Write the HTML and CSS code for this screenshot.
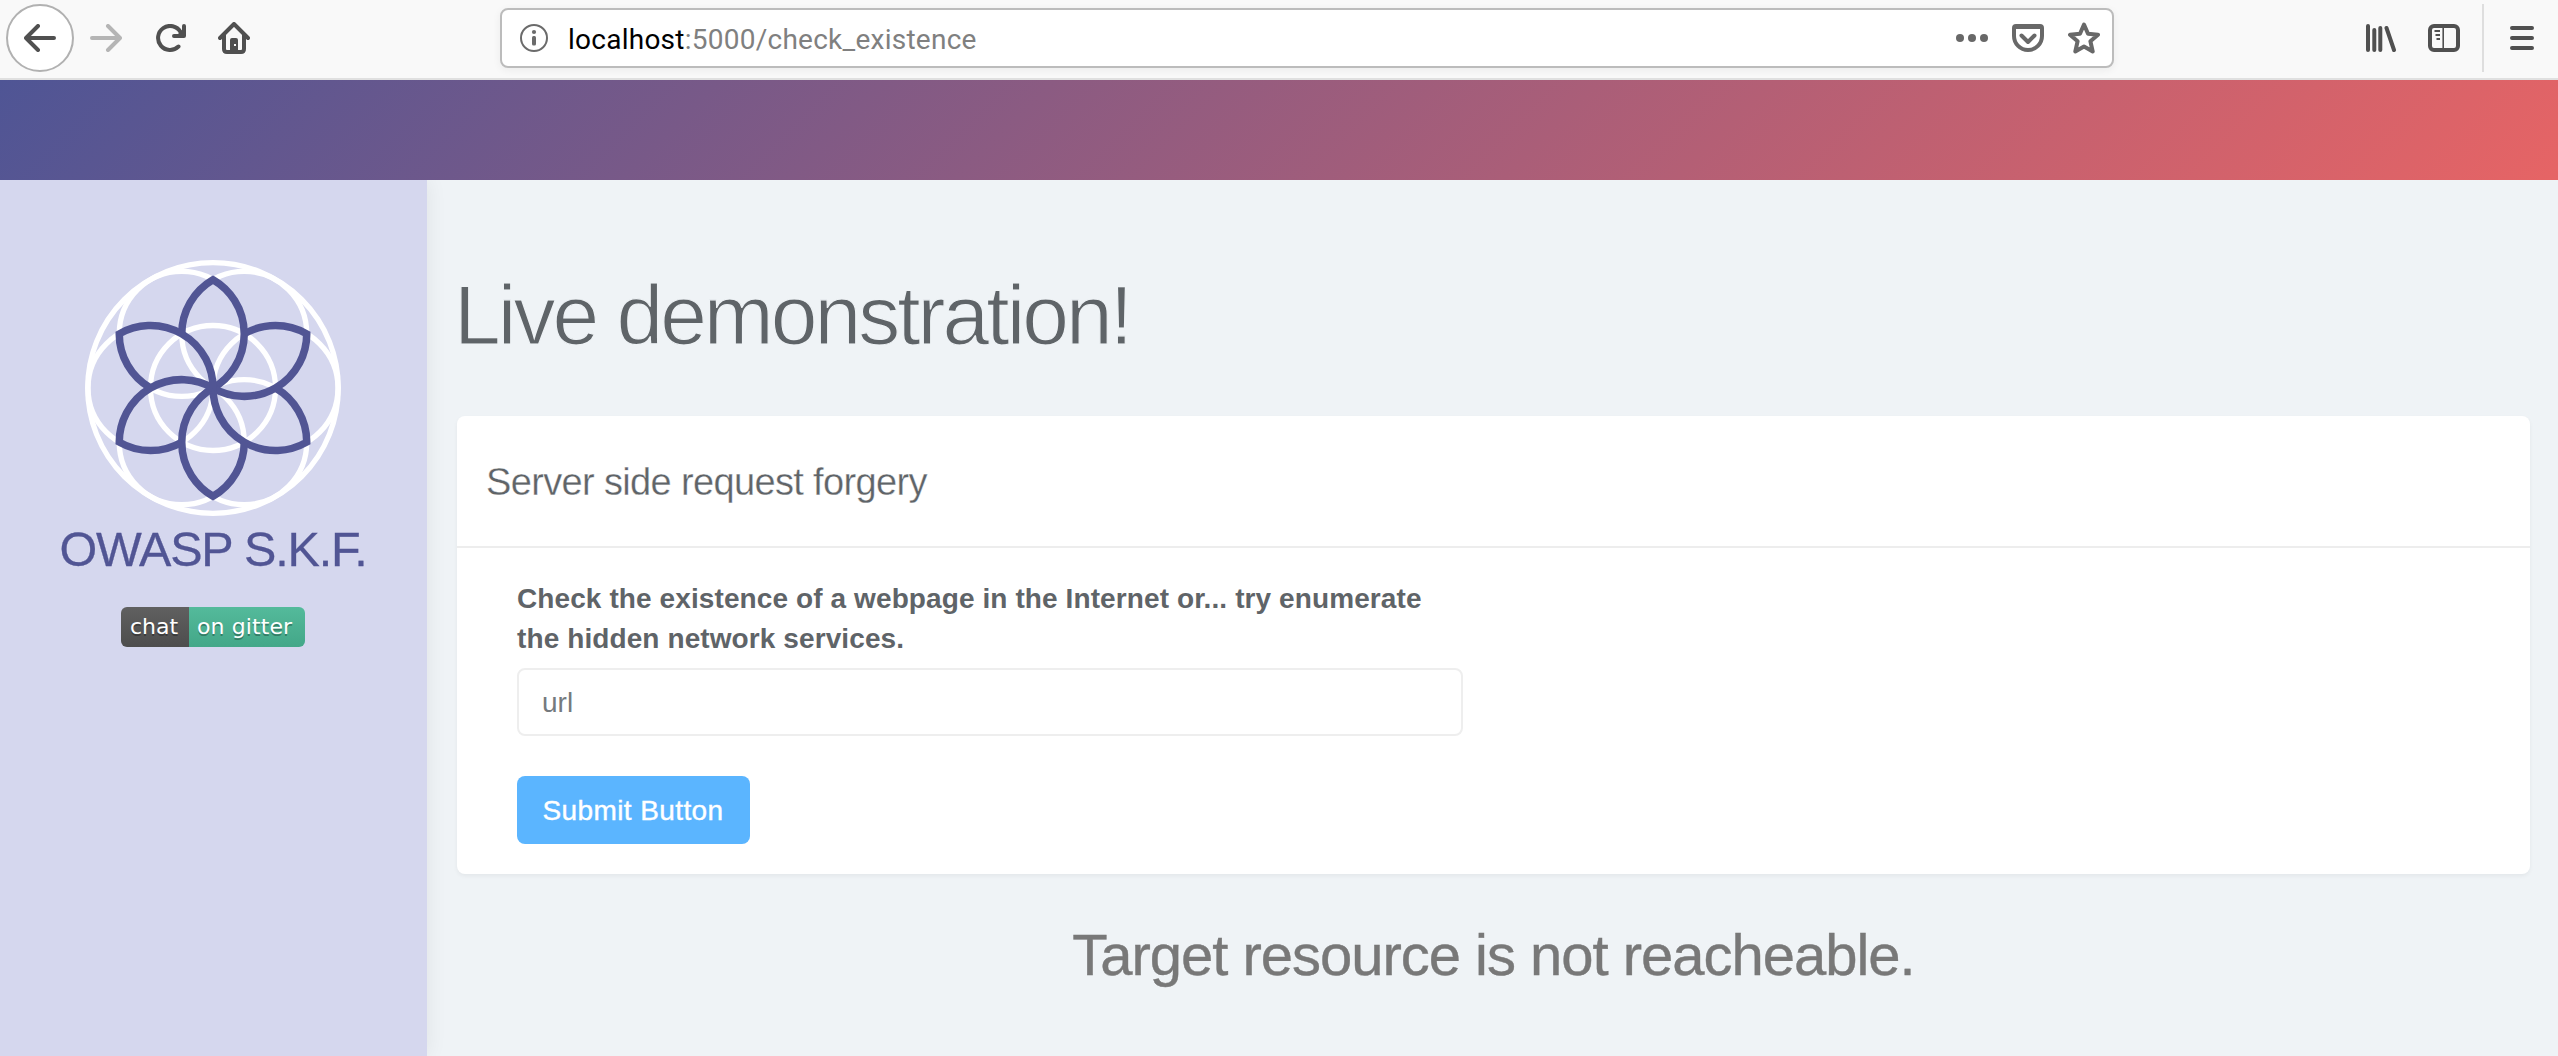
FILE: index.html
```html
<!DOCTYPE html>
<html lang="en">
<head>
<meta charset="utf-8">
<title>OWASP S.K.F. - Live demonstration</title>
<link rel="stylesheet" href="styles.css">
</head>
<body>
<div class="toolbar">
  <div class="nav">
    <span class="back"><svg width="32" height="28" viewBox="0 0 32 28"><path d="M30 14H3M14 2 2 14 14 26" class="line"/></svg></span>
    <svg class="forward" width="32" height="28" viewBox="0 0 32 28"><path d="M2 14h27M18 2l12 12-12 12" class="line"/></svg>
    <svg class="reload" width="30" height="28" viewBox="0 0 30 28"><path d="M22.5 22.500A12 12 0 1 1 24.500 8M28 2v10H18" class="line"/><path d="M20 12l8-8v8z" fill="currentColor"/></svg>
    <svg class="home" width="32" height="32" viewBox="0 0 32 32"><path d="M2 16 16 2l14 14M6 13v14q0 3 3 3h14q3 0 3-3V13" class="line"/><path fill-rule="evenodd" fill="currentColor" d="M12 30V18q0-2 2-2h4q2 0 2 2v12zM16 22v2h2v-2z"/></svg>
  </div>
  <div class="urlbar">
    <svg class="info" width="28" height="28" viewBox="0 0 28 28"><circle cx="14" cy="14" r="13" fill="none" stroke="currentColor" stroke-width="2"/><circle cx="14" cy="8" r="2.100" fill="currentColor"/><rect x="12" y="12" width="4" height="9.500" rx="1.500" fill="currentColor"/></svg>
    <div class="address"><span class="host">localhost</span>:5000/check_existence</div>
    <div class="actions">
      <svg width="32" height="32" viewBox="0 0 32 32" fill="currentColor"><circle cx="4" cy="16" r="4"/><circle cx="16" cy="16" r="4"/><circle cx="28" cy="16" r="4"/></svg>
      <svg width="32" height="32" viewBox="0 0 32 32"><path d="M4 4h24q2 0 2 2v8a14 14 0 0 1-28 0V6q0-2 2-2zM9.500 13.500l6.500 6.500 6.500-6.500" class="line"/><path d="M2 4h28v3H2z" fill="currentColor"/></svg>
      <svg width="32" height="32" viewBox="0 0 32 32"><path d="M16 2.500l4 9.300 10 .9-7.600 6.500 2.300 10.300L16 24.500l-8.700 5 2.300-10.300L2 12.700l10-.9z" class="line"/></svg>
    </div>
  </div>
  <div class="tools">
    <svg width="32" height="28" viewBox="0 0 32 28"><path d="M2 2v24M8.300 6v20M14.300 4v22M20.500 4l7.500 22" class="line"/></svg>
    <svg width="32" height="28" viewBox="0 0 32 28"><rect x="2" y="2" width="28" height="24" rx="4" class="line"/><path d="M15.200 3v22" stroke="currentColor" stroke-width="1.600"/><path d="M6.500 7h5.500M7.500 11h4.500M8.500 15h3.500" stroke="currentColor" stroke-width="2"/></svg>
    <span class="divider"></span>
    <svg width="24" height="24" viewBox="0 0 24 24"><path d="M2 2h20M2 12h20M2 22h20" class="line"/></svg>
  </div>
</div>
<header class="banner"></header>
<div class="page">
  <aside class="sidebar">
    <svg class="logo" width="256" height="256" viewBox="-128 -128 256 256">
      <defs><path id="petal" d="M0 0A62.500 62.500 0 0 0 0-108.250A62.500 62.500 0 0 0-31.250-54.130"/></defs>
      <g class="rings">
        <circle r="125.300"/><circle r="62.500"/>
        <circle cx="62.500" r="62.500"/><circle cx="-62.500" r="62.500"/>
        <circle cx="31.250" cy="54.130" r="62.500"/><circle cx="-31.250" cy="54.130" r="62.500"/>
        <circle cx="31.250" cy="-54.130" r="62.500"/><circle cx="-31.250" cy="-54.130" r="62.500"/>
      </g>
      <g class="petals">
        <use href="#petal"/><use href="#petal" transform="rotate(60)"/><use href="#petal" transform="rotate(120)"/>
        <use href="#petal" transform="rotate(180)"/><use href="#petal" transform="rotate(240)"/><use href="#petal" transform="rotate(300)"/>
      </g>
    </svg>
    <div class="brand">OWASP S.K.F.</div>
    <a class="badge"><span class="badge-key">chat</span><span class="badge-value">on gitter</span></a>
  </aside>
  <main class="content">
    <h1>Live demonstration!</h1>
    <section class="card">
      <h2>Server side request forgery</h2>
      <form class="form">
        <label for="url">Check the existence of a webpage in the Internet or... try enumerate<br>the hidden network services.</label>
        <input id="url" type="text" placeholder="url">
        <button type="button">Submit Button</button>
      </form>
    </section>
    <p class="result">Target resource is not reacheable.</p>
  </main>
</div>
</body>
</html>
```
FILE: styles.css
```css
* { box-sizing: border-box; }
body {
  margin: 0;
  height: 1056px;
  display: flex;
  flex-direction: column;
  overflow: hidden;
  background: #eff3f6;
  color: #5f6468;
  font-family: "Liberation Sans", Arial, sans-serif;
}
svg { display: block; flex: none; }
.line {
  fill: none;
  stroke: currentColor;
  stroke-width: 4;
  stroke-linecap: round;
  stroke-linejoin: round;
}

.toolbar {
  flex: none;
  height: 80px;
  display: flex;
  align-items: flex-start;
  background: #f9f9f9;
  border-bottom: 2px solid #e0e0e0;
  color: #505050;
}
.nav {
  width: 500px;
  height: 76px;
  padding-left: 6px;
  display: flex;
  align-items: center;
}
.back {
  width: 68px;
  height: 68px;
  display: flex;
  align-items: center;
  justify-content: center;
  border: 2px solid #b1b1b1;
  border-radius: 50%;
  background: #fff;
}
.forward { margin-left: 16px; color: #b5b5b5; }
.reload { margin-left: 34px; }
.home { margin-left: 32px; }
.urlbar {
  width: 1614px;
  height: 60px;
  margin-top: 8px;
  padding: 0 12px 0 18px;
  display: flex;
  align-items: center;
  background: #fff;
  border: 2px solid #bcbcbc;
  border-radius: 8px;
  box-shadow: 0 2px 8px rgba(0, 0, 0, .06);
}
.info { color: #6b6b6b; }
.address {
  flex: 1;
  padding: 3px 0 0 20px;
  color: #808080;
  font: 28px/40px Roboto, sans-serif;
  letter-spacing: .25px;
  white-space: nowrap;
}
.host { color: #000; }
.actions { display: flex; gap: 24px; color: #686868; }
.tools {
  margin-left: auto;
  height: 76px;
  padding-right: 24px;
  display: flex;
  align-items: center;
}
.tools svg + svg { margin-left: 30px; }
.divider { width: 2px; height: 68px; margin: 0 26px 0 22px; background: #dedede; }

.banner {
  flex: none;
  height: 100px;
  background: linear-gradient(135deg, #4f5595, #e66465);
}
.page { flex: 1; display: flex; }
.sidebar {
  width: 427px;
  padding: 80px 1px 0 0;
  display: flex;
  flex-direction: column;
  align-items: center;
  background: #d5d7ee;
  box-shadow: 0 0 20px rgba(0, 0, 0, .07);
  clip-path: inset(0 -30px 0 0);
}
.rings { fill: none; stroke: #fff; stroke-width: 5.300; }
.petals { fill: none; stroke: #515594; stroke-width: 7.500; }
.brand {
  margin-top: 5px;
  color: #515594;
  font-size: 48.500px;
  line-height: 56px;
  letter-spacing: -1.150px;
  white-space: nowrap;
  -webkit-text-stroke: .3px #515594;
}
.badge {
  margin-top: 30px;
  width: 184px;
  height: 40px;
  display: flex;
  border-radius: 6px;
  overflow: hidden;
  color: #fff;
  font: 22px/39px "DejaVu Sans", Verdana, sans-serif;
  text-shadow: 0 2px 0 rgba(1, 1, 1, .3);
  white-space: nowrap;
}
.badge-key { width: 68px; padding-left: 9px; background: linear-gradient(#606060, #4d4d4d); }
.badge-value { width: 116px; padding-left: 8px; background: linear-gradient(#54ba9b, #43a788); letter-spacing: .1px; }

.content { flex: 1; padding: 87px 28px 0 30px; }
h1, h2, p { margin: 0; font-weight: 400; white-space: nowrap; }
h1 {
  margin-left: -3px;
  font-size: 84px;
  line-height: 96px;
  letter-spacing: -3px;
  -webkit-text-stroke: 1.200px #eff3f6;
}
.card {
  margin-top: 53px;
  background: #fff;
  border-radius: 8px;
  box-shadow: 0 2px 4px rgba(0, 0, 0, .05);
}
h2 {
  padding: 46px 29px 44px;
  border-bottom: 2px solid #ededed;
  font-size: 38px;
  line-height: 40px;
  letter-spacing: -.650px;
  -webkit-text-stroke: .300px #fff;
}
.form {
  padding: 31px 60px 30px;
  display: flex;
  flex-direction: column;
  align-items: flex-start;
}
label {
  font-size: 28px;
  font-weight: 700;
  line-height: 40px;
  letter-spacing: .1px;
  white-space: nowrap;
}
input {
  width: 946px;
  height: 68px;
  margin-top: 9px;
  padding: 2px 23px 0;
  border: 2px solid #eee;
  border-radius: 8px;
  background: #fff;
  font: 28px "Liberation Sans", Arial, sans-serif;
}
input::placeholder { color: #757a7e; opacity: 1; }
button {
  width: 233px;
  height: 68px;
  margin-top: 40px;
  padding: 1px 1px 0 0;
  border: 0;
  border-radius: 8px;
  background: #5bb5ff;
  color: #fff;
  font: 28px "Liberation Sans", Arial, sans-serif;
  letter-spacing: .4px;
  -webkit-text-stroke: .4px #fff;
}
.result {
  margin-top: 49px;
  color: #787878;
  font-size: 58px;
  line-height: 64px;
  letter-spacing: -1.020px;
  text-align: center;
  -webkit-text-stroke: .4px #787878;
}
```
